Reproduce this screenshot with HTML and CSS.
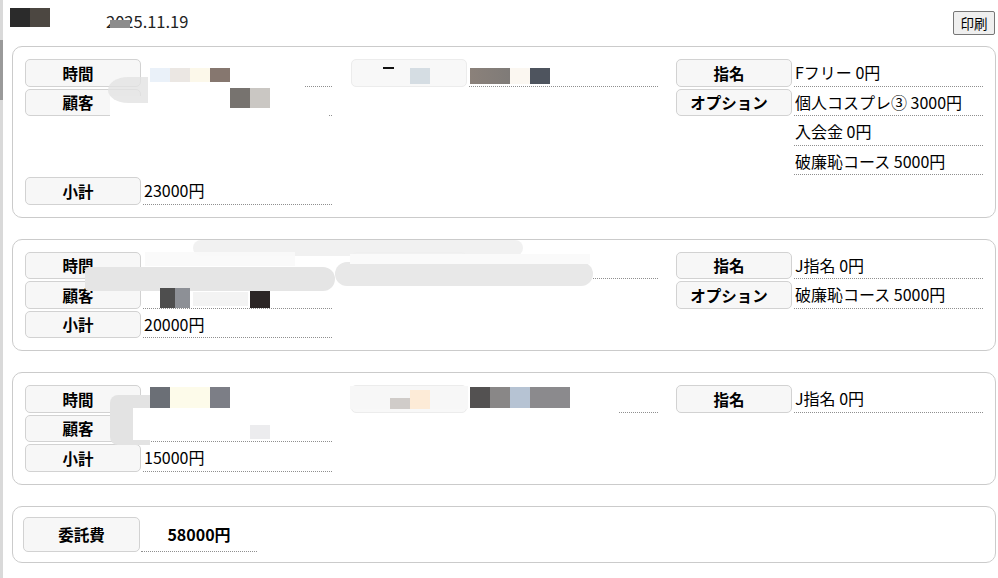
FILE: index.html
```html
<!DOCTYPE html>
<html lang="ja">
<head>
<meta charset="utf-8">
<title>精算</title>
<link rel="stylesheet" href="styles.css">
</head>
<body>
<div class="page">
  <div class="header">
    <div class="head-left">
      <div class="title-mask"><span class="tm1"></span><span class="tm2"></span></div>
      <div class="date">2025.11.19<span class="date-mask"></span></div>
    </div>
    <button class="print">印刷</button>
  </div>

  <div class="card c1">
    <div class="top">
      <div class="col">
        <div class="row"><div class="label">時間</div><div class="value"></div></div>
        <div class="row"><div class="label">顧客</div><div class="value"></div></div>
      </div>
      <div class="col">
        <div class="row"><div class="label ghost"></div><div class="value"></div></div>
      </div>
      <div class="col">
        <div class="row"><div class="label">指名</div><div class="value">Fフリー 0円</div></div>
        <div class="row"><div class="label">オプション</div><div class="value">個人コスプレ③ 3000円</div></div>
        <div class="row cont"><div class="value">入会金 0円</div></div>
        <div class="row cont"><div class="value">破廉恥コース 5000円</div></div>
      </div>
    </div>
    <div class="row sub"><div class="label">小計</div><div class="value">23000円</div></div>
    <span class="rd c1a"></span><span class="rd c1b"></span><span class="rd c1c"></span><span class="rd c1d"></span>
    <span class="rd c1w1"></span><span class="rd c1w2"></span><span class="rd c1g"></span>
    <span class="rd c1e"></span><span class="rd c1f"></span>
    <span class="rd c1h"></span><span class="rd c1i"></span><span class="rd c1j"></span><span class="rd c1k"></span><span class="rd c1l"></span>
  </div>

  <div class="card c2">
    <div class="top">
      <div class="col">
        <div class="row"><div class="label">時間</div><div class="value"></div></div>
        <div class="row"><div class="label">顧客</div><div class="value"></div></div>
      </div>
      <div class="col">
        <div class="row"><div class="label ghost"></div><div class="value"></div></div>
      </div>
      <div class="col">
        <div class="row"><div class="label">指名</div><div class="value">J指名 0円</div></div>
        <div class="row"><div class="label">オプション</div><div class="value">破廉恥コース 5000円</div></div>
      </div>
    </div>
    <div class="row sub"><div class="label">小計</div><div class="value">20000円</div></div>
    <span class="rd c2s0"></span><span class="rd c2s1"></span><span class="rd c2s2"></span><span class="rd c2w"></span>
    <span class="rd c2a"></span><span class="rd c2b"></span><span class="rd c2c"></span><span class="rd c2w2"></span>
  </div>

  <div class="card c3">
    <div class="top">
      <div class="col">
        <div class="row"><div class="label">時間</div><div class="value"></div></div>
        <div class="row"><div class="label">顧客</div><div class="value"></div></div>
      </div>
      <div class="col">
        <div class="row"><div class="label ghost"></div><div class="value"></div></div>
      </div>
      <div class="col">
        <div class="row"><div class="label">指名</div><div class="value">J指名 0円</div></div>
      </div>
    </div>
    <div class="row sub"><div class="label">小計</div><div class="value">15000円</div></div>
    <span class="rd c3w1"></span><span class="rd c3g"></span><span class="rd c3w2"></span>
    <span class="rd c3a"></span><span class="rd c3b"></span><span class="rd c3c"></span><span class="rd c3s"></span>
    <span class="rd c3l"></span><span class="rd c3m"></span><span class="rd c3n"></span>
    <span class="rd c3d"></span><span class="rd c3e"></span><span class="rd c3f"></span><span class="rd c3h"></span><span class="rd c3w3"></span>
  </div>

  <div class="card total">
    <div class="row"><div class="label">委託費</div><div class="value">58000円</div></div>
  </div>
</div>
</body>
</html>
```

FILE: styles.css
```css
html, body {
  margin: 0;
  padding: 0;
  background: #ffffff;
}
body {
  font-family: "Noto Sans CJK JP", "Noto Sans", sans-serif;
  color: #000;
}
.page {
  position: relative;
  border-left: 3px solid #d9d9d9;
  padding: 0 2px 20px 9px;
  min-height: 578px;
  box-sizing: border-box;
}
.page::before {
  content: "";
  position: absolute;
  left: -3px;
  top: 40px;
  width: 3px;
  height: 60px;
  background: #9a9a9a;
}

/* header */
.header {
  height: 46px;
  display: flex;
  justify-content: space-between;
  align-items: flex-start;
}
.head-left {
  display: flex;
  align-items: flex-start;
}
.title-mask {
  display: flex;
  margin-left: -2px;
  margin-top: 8px;
  height: 19px;
}
.tm1 { width: 20px; background: #2b2b2b; }
.tm2 { width: 20px; background: #4c4741; }
.date {
  position: relative;
  margin-left: 56px;
  margin-top: 10px;
  font-size: 16.5px;
  line-height: 22px;
  color: #222;
}
.date-mask {
  position: absolute;
  left: 4px;
  top: 10px;
  width: 20px;
  height: 8px;
  background: #8c8c8c;
}
.print {
  margin-top: 11px;
  margin-right: 1px;
  width: 42px;
  height: 24px;
  padding: 0;
  font-family: "Noto Sans CJK JP", sans-serif;
  font-size: 13.5px;
  color: #000;
  background: #efefef;
  border: 1px solid #767676;
  border-radius: 2px;
}

/* cards */
.card {
  position: relative;
  border: 1px solid #cbcbcb;
  border-radius: 10px;
  padding: 12px;
  margin-bottom: 21px;
  display: flex;
  flex-direction: column;
  gap: 2px;
}
.top {
  display: flex;
  justify-content: space-between;
}
.col {
  width: 307px;
  display: flex;
  flex-direction: column;
  gap: 2px;
}
.row {
  display: flex;
  height: 27.5px;
  width: 307px;
}
.label {
  box-sizing: border-box;
  width: 116px;
  flex: none;
  border: 1px solid #d2d2d2;
  border-radius: 5px;
  background: #f7f7f7;
  font-size: 15.5px;
  font-weight: bold;
  display: flex;
  align-items: center;
  justify-content: center;
  padding-right: 10px;
}
.label.ghost {
  background: #f8f8f8;
  border-color: #ececec;
}
.value {
  flex: 1;
  margin-left: 2px;
  border-bottom: 1px dotted #8f8f8f;
  font-size: 16px;
  display: flex;
  align-items: center;
  padding-left: 1px;
  white-space: nowrap;
}
.row.cont .value {
  margin-left: 118px;
}

/* total card */
.card.total {
  padding: 10px;
}
.total .row {
  height: 35px;
}
.total .label {
  width: 117px;
  padding-right: 0;
}
.total .value {
  flex: none;
  width: 116px;
  margin-left: 1px;
  font-weight: bold;
  justify-content: center;
  padding-left: 0;
}

/* redaction mosaic overlays */
.rd {
  position: absolute;
  display: block;
}
/* card 1: origin (13,47) */
.c1w1 { left: 130px; top: 35px; width: 162px; height: 6px; background: #fff; }
.c1w2 { left: 97px; top: 49px; width: 218px; height: 23px; background: #fff; }
.c1g { left: 95px; top: 30px; width: 40px; height: 26px; background: #e2e2e2; border-radius: 50% 0 0 50%; opacity: .8; }
.c1a { left: 137px; top: 21px; width: 20px; height: 19px; background: #eaf1f9; }
.c1b { left: 157px; top: 21px; width: 20px; height: 19px; background: #ebe7e3; }
.c1c { left: 177px; top: 21px; width: 20px; height: 19px; background: #fcf8ea; }
.c1d { left: 197px; top: 21px; width: 20px; height: 19px; background: #86776f; }
.c1e { left: 217px; top: 41px; width: 20px; height: 20px; background: #77736f; }
.c1f { left: 237px; top: 41px; width: 20px; height: 20px; background: #cac7c3; }
.c1h { left: 397px; top: 21px; width: 20px; height: 16px; background: #d5dde3; }
.c1i { left: 457px; top: 21px; width: 40px; height: 16px; background: linear-gradient(90deg, #8b817a, #7f7b78); }
.c1j { left: 497px; top: 21px; width: 20px; height: 16px; background: #fbf7f1; }
.c1k { left: 517px; top: 21px; width: 20px; height: 16px; background: #4e545e; }
.c1l { left: 370px; top: 20px; width: 11px; height: 2px; background: #111; }

/* card 2: origin (13,239) */
.c2s0 { left: 180px; top: 0px; width: 330px; height: 16px; background: #f0f0f0; border-radius: 8px; opacity: .9; }
.c2s1 { left: 72px; top: 27px; width: 250px; height: 24px; background: #e5e5e5; border-radius: 4px 12px 12px 4px; }
.c2s2 { left: 322px; top: 22px; width: 258px; height: 24px; background: #e8e8e8; border-radius: 12px; }
.c2w { left: 132px; top: 12px; width: 150px; height: 14px; background: #fafafa; opacity: .9; }
.c2a { left: 147px; top: 48px; width: 30px; height: 20px; background: linear-gradient(90deg, #4e4e4e 50%, #8d9096 50%); }
.c2b { left: 237px; top: 51px; width: 20px; height: 17px; background: #2b2626; }
.c2c { left: 180px; top: 52px; width: 55px; height: 14px; background: #f3f3f3; }
.c2w2 { left: 337px; top: 14px; width: 240px; height: 10px; background: #fafafa; }

/* card 3: origin (13,373) */
.c3w1 { left: 125px; top: 34px; width: 210px; height: 6px; background: #fff; }
.c3g { left: 97px; top: 22px; width: 40px; height: 50px; background: #e3e3e3; border-radius: 8px 0 0 8px; }
.c3w2 { left: 120px; top: 35px; width: 110px; height: 32px; background: #fff; }
.c3a { left: 137px; top: 14px; width: 20px; height: 21px; background: #6b6f76; }
.c3b { left: 157px; top: 14px; width: 40px; height: 21px; background: #fdfbea; }
.c3c { left: 197px; top: 14px; width: 20px; height: 21px; background: #7c7e86; }
.c3s { left: 237px; top: 52px; width: 20px; height: 14px; background: #ececee; }
.c3l { left: 337px; top: 13px; width: 118px; height: 23px; background: #f7f7f7; }
.c3m { left: 377px; top: 25px; width: 20px; height: 11px; background: #d0ccc9; }
.c3n { left: 397px; top: 17px; width: 20px; height: 19px; background: #fdebd7; }
.c3d { left: 457px; top: 14px; width: 20px; height: 21px; background: #535151; }
.c3e { left: 477px; top: 14px; width: 20px; height: 21px; background: #898787; }
.c3f { left: 497px; top: 14px; width: 20px; height: 21px; background: #b6c3d3; }
.c3h { left: 517px; top: 14px; width: 40px; height: 21px; background: #8b8a8d; }
.c3w3 { left: 455px; top: 35px; width: 150px; height: 6px; background: #fff; }
```
